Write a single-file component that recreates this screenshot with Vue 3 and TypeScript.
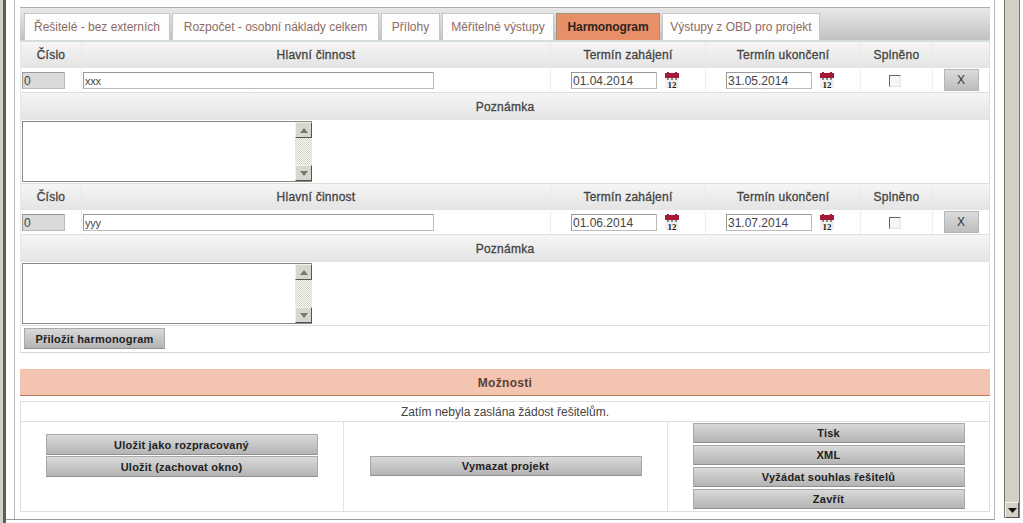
<script setup lang="ts">
const tabs = [
  { label: 'Řešitelé - bez externích', width: 146 },
  { label: 'Rozpočet - osobní náklady celkem', width: 207 },
  { label: 'Přílohy', width: 59 },
  { label: 'Měřitelné výstupy', width: 112 },
  { label: 'Harmonogram', width: 104, active: true },
  { label: 'Výstupy z OBD pro projekt', width: 158 },
];

const rows = [
  { id: 1, nazev: 'xxx', od: '01.04.2014', doDne: '31.05.2014' },
  { id: 2, nazev: 'yyy', od: '01.06.2014', doDne: '31.07.2014' },
];

const rightButtons = ['Tisk', 'XML', 'Vyžádat souhlas řešitelů', 'Zavřít'];
</script>

<template>
  <div class="page">
    <div class="chrome-left"></div>
    <div class="frame">
      <main class="panel">
        <nav class="tabs">
          <a
            v-for="t in tabs"
            :key="t.label"
            class="tab"
            :class="{ active: t.active }"
            :style="{ width: t.width + 'px' }"
          >{{ t.label }}</a>
        </nav>

        <section class="sheet">
          <div v-for="r in rows" :key="r.id" class="record">
            <div class="grid head">
              <div class="th">Číslo</div>
              <div class="th">Hlavní činnost</div>
              <div class="th">Termín zahájení</div>
              <div class="th">Termín ukončení</div>
              <div class="th">Splněno</div>
              <div class="th"></div>
            </div>
            <div class="grid body">
              <div class="td"><input class="num" value="0" readonly /></div>
              <div class="td"><input class="name" :value="r.nazev" /></div>
              <div class="td date">
                <input class="day" :value="r.od" />
                <svg class="cal" width="16" height="17" viewBox="0 0 16 17">
                  <rect x="1" y="1" width="14" height="5" fill="#a31a36" />
                  <rect x="3" y="0" width="2" height="2" fill="#a31a36" />
                  <rect x="11" y="0" width="2" height="2" fill="#a31a36" />
                  <rect x="1" y="6" width="14" height="10" fill="#f0f0f0" />
                  <rect x="3" y="6" width="2" height="2" fill="#888" />
                  <rect x="7" y="6" width="2" height="2" fill="#888" />
                  <rect x="11" y="6" width="2" height="2" fill="#888" />
                  <text x="8" y="16" text-anchor="middle" class="cal-num">12</text>
                </svg>
              </div>
              <div class="td date">
                <input class="day" :value="r.doDne" />
                <svg class="cal" width="16" height="17" viewBox="0 0 16 17">
                  <rect x="1" y="1" width="14" height="5" fill="#a31a36" />
                  <rect x="3" y="0" width="2" height="2" fill="#a31a36" />
                  <rect x="11" y="0" width="2" height="2" fill="#a31a36" />
                  <rect x="1" y="6" width="14" height="10" fill="#f0f0f0" />
                  <rect x="3" y="6" width="2" height="2" fill="#888" />
                  <rect x="7" y="6" width="2" height="2" fill="#888" />
                  <rect x="11" y="6" width="2" height="2" fill="#888" />
                  <text x="8" y="16" text-anchor="middle" class="cal-num">12</text>
                </svg>
              </div>
              <div class="td center"><span class="check"></span></div>
              <div class="td center"><button class="del">X</button></div>
            </div>
            <div class="th note-head">Poznámka</div>
            <div class="note-row">
              <div class="note">
                <textarea class="note-text"></textarea>
                <div class="sb">
                  <span class="sb-btn">
                    <svg width="8" height="5" viewBox="0 0 8 5"><path d="M4 0 8 5H0z" fill="#777" /></svg>
                  </span>
                  <span class="sb-track"></span>
                  <span class="sb-btn">
                    <svg width="8" height="5" viewBox="0 0 8 5"><path d="M0 0h8L4 5z" fill="#777" /></svg>
                  </span>
                </div>
              </div>
            </div>
          </div>
          <div class="attach">
            <button class="btn attach-btn">Přiložit harmonogram</button>
          </div>
        </section>

        <h2 class="options-title">Možnosti</h2>
        <section class="options">
          <p class="status">Zatím nebyla zaslána žádost řešitelům.</p>
          <div class="actions">
            <div class="col left">
              <button class="btn wide">Uložit jako rozpracovaný</button>
              <button class="btn wide">Uložit (zachovat okno)</button>
            </div>
            <div class="col mid">
              <button class="btn wide">Vymazat projekt</button>
            </div>
            <div class="col right">
              <button v-for="b in rightButtons" :key="b" class="btn wide">{{ b }}</button>
            </div>
          </div>
        </section>
      </main>
    </div>
    <div class="page-sb">
      <span class="page-sb-btn">
        <svg width="9" height="5" viewBox="0 0 9 5"><path d="M0 0h9L4.500 5z" fill="#111" /></svg>
      </span>
    </div>
  </div>
</template>

<style>
html,
body {
  margin: 0;
  overflow: hidden;
  background: #fff;
}
</style>

<style scoped>
.page {
  display: flex;
  width: 1023px;
  height: 523px;
  box-sizing: border-box;
  overflow: hidden;
  background: #fff;
  font-family: "Liberation Sans", Arial, sans-serif;
  font-size: 12px;
  color: #333;
}
.chrome-left {
  width: 3px;
  flex: none;
  background: #d4d0c8;
  border-right: 3px solid #5e5e56;
}
.frame {
  width: 989px;
  flex: none;
  box-sizing: border-box;
  height: 520px;
  padding: 7px 5px 0 8px;
  border-bottom: 1px solid #9a9a9a;
  border-right: 1px solid #b5b5b5;
  background: #fff;
  position: relative;
}
.frame::before {
  content: "";
  position: absolute;
  left: 8px;
  top: 0;
  bottom: 0;
  width: 1px;
  background: #b9b9b9;
}
.panel {
  margin-left: 6px;
  width: 970px;
}
.tabs {
  display: flex;
  gap: 2px;
  height: 35px;
  box-sizing: border-box;
  padding: 5px 0 0 4px;
  background: linear-gradient(#e8e8e8, #c2c2c2);
  border-top: 1px solid #adadad;
  border-bottom: 2px solid #d6dde0;
}
.tab {
  display: flex;
  align-items: center;
  justify-content: center;
  box-sizing: border-box;
  height: 27px;
  flex: none;
  background: #fdfdfd;
  border: 1px solid #c8c8c8;
  border-bottom: 0;
  color: #8d6c66;
  white-space: nowrap;
}
.tab.active {
  background: #e79067;
  border-color: #a8917f;
  color: #2e2420;
  font-weight: bold;
  letter-spacing: -0.1px;
}
.sheet {
  border-right: 1px solid #e0e0e0;
  border-left: 1px solid #e8e8e8;
  border-bottom: 1px solid #d8d8d8;
}
.grid {
  display: grid;
  grid-template-columns: 60px 469px 155px 155px 72px 1fr;
}
.th {
  display: flex;
  align-items: center;
  justify-content: center;
  height: 27px;
  background: linear-gradient(#f5f5f5, #e4e4e4);
  font-weight: normal;
  color: #444;
  letter-spacing: 0.25px;
  -webkit-text-stroke: 0.3px #444;
}
.head .th + .th {
  border-left: 1px solid #e9e9e9;
}
.head .th {
  height: 26px;
  box-sizing: border-box;
}
.body {
  height: 25px;
  box-sizing: border-box;
  border-bottom: 1px solid #dedede;
}
.td {
  display: flex;
  align-items: center;
  box-sizing: border-box;
  height: 24px;
  padding-top: 1px;
}
.td + .td {
  border-left: 1px solid #eee;
}
.center {
  justify-content: center;
}
input {
  box-sizing: border-box;
  height: 17px;
  padding: 0 1px;
  font: 12px "Liberation Sans", Arial, sans-serif;
  color: #444;
  border: 1px solid #999;
  border-right-color: #bbb;
  border-bottom-color: #bbb;
  outline: none;
  background: #fff;
}
.num {
  width: 43px;
  margin-left: 1px;
  background: #d9d9d9;
}
.name {
  width: 351px;
  margin-left: 1px;
  font-size: 11px;
  letter-spacing: -0.3px;
}
.date {
  padding-left: 20px;
}
.day {
  width: 86px;
}
.cal {
  margin-left: 7px;
  flex: none;
}
.cal-num {
  font: bold 9px "Liberation Serif", serif;
  fill: #222;
}
.check {
  display: block;
  width: 12px;
  height: 12px;
  box-sizing: border-box;
  margin-left: -4px;
  border: 1px solid #e4e4e4;
  border-top-color: #666;
  border-left-color: #666;
  background: #f6f6f6;
}
.del {
  width: 35px;
  height: 22px;
  padding: 0;
  margin-top: -1px;
  border: 1px solid #b5b5b5;
  background: linear-gradient(#dcdcdc, #bdbdbd);
  font: 12px "Liberation Sans", Arial, sans-serif;
  color: #333;
}
.note-head {
  height: 27px;
  box-sizing: border-box;
}
.note-row {
  height: 64px;
  box-sizing: border-box;
  padding: 1px 0 0 1px;
  border-bottom: 1px solid #dedede;
}
.note {
  display: flex;
  width: 290px;
  height: 61px;
  box-sizing: border-box;
  border: 1px solid #888;
  border-right: 0;
}
.note-text {
  flex: 1;
  min-width: 0;
  padding: 0;
  border: 0;
  outline: none;
  resize: none;
  overflow: hidden;
  background: #fff;
}
.sb {
  display: flex;
  flex-direction: column;
  width: 17px;
  flex: none;
}
.sb-btn {
  display: flex;
  align-items: center;
  justify-content: center;
  height: 16px;
  flex: none;
  box-sizing: border-box;
  background: #d8d6cf;
  border: 1px solid #f2f2ee;
  border-right-color: #55554f;
  border-bottom-color: #55554f;
}
.sb-track {
  flex: 1;
  background: repeating-conic-gradient(#d4d0c8 0 25%, #fbfbf9 0 50%) 0 0 / 2px 2px;
}
.attach {
  height: 26px;
  box-sizing: border-box;
  padding: 2px 0 0 3px;
}
.btn {
  display: block;
  box-sizing: border-box;
  padding: 0;
  border: 1px solid #a9a9a9;
  border-bottom-color: #8f8f8f;
  background: linear-gradient(#d9d9d9, #b4b4b4);
  font: bold 11px "Liberation Sans", Arial, sans-serif;
  letter-spacing: 0.22px;
  color: #222;
  text-align: center;
}
.attach-btn {
  width: 141px;
  height: 21px;
}
.options-title {
  margin: 16px 0 0;
  padding-top: 1px;
  height: 27px;
  box-sizing: border-box;
  display: flex;
  align-items: center;
  justify-content: center;
  background: #f3c4b0;
  border-bottom: 1px solid #b5765a;
  font-size: 12px;
  font-weight: bold;
  letter-spacing: 0.3px;
  color: #5a4038;
}
.options {
  margin-top: 5px;
  border: 1px solid #e0e0e0;
  height: 111px;
  box-sizing: border-box;
}
.status {
  margin: 0;
  height: 20px;
  box-sizing: border-box;
  border-bottom: 1px solid #e0e0e0;
  display: flex;
  align-items: center;
  justify-content: center;
  color: #444;
}
.actions {
  display: grid;
  grid-template-columns: 322px 324px 1fr;
  height: 89px;
}
.col {
  display: flex;
  flex-direction: column;
  align-items: center;
  box-sizing: border-box;
}
.col + .col {
  border-left: 1px solid #e4e4e4;
}
.left {
  padding: 12px 1px 0 0;
  gap: 1px;
}
.mid {
  padding-top: 34px;
}
.right {
  padding-top: 1px;
  gap: 2px;
}
.wide {
  width: 272px;
  height: 21px;
  flex: none;
}
.mid .wide,
.right .wide {
  height: 20px;
}
.page-sb {
  flex: 1;
  display: flex;
  flex-direction: column;
  justify-content: flex-end;
  box-sizing: border-box;
  margin: 0 3px 5px 9px;
  background: #d4d0c8;
  border-left: 1px solid #77776f;
  border-right: 1px solid #77776f;
}
.page-sb-btn {
  display: flex;
  align-items: center;
  justify-content: center;
  height: 14px;
  background: #d4d0c8;
  border: 1px solid #f5f5f2;
  border-right-color: #55554f;
  border-bottom-color: #55554f;
}
</style>
